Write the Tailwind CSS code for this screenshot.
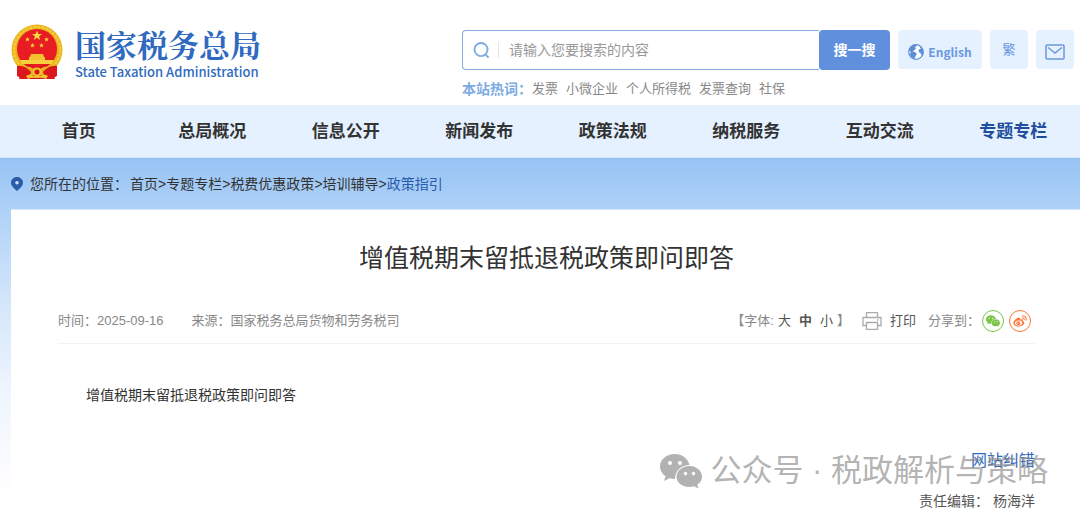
<!DOCTYPE html>
<html lang="zh-CN">
  <head>
    <meta charset="UTF-8" />
    <meta name="viewport" content="width=device-width, initial-scale=1.0" />
    <script src="https://cdn.jsdelivr.net/npm/@tailwindcss/browser@4"></script>
    <title>增值税期末留抵退税政策即问即答</title>
  </head>
  <body class="relative min-h-screen flex flex-col overflow-x-hidden bg-white text-[#333] font-['Liberation_Sans','Noto_Sans_CJK_SC',sans-serif]">
    <!-- header -->
    <header class="flex items-start justify-between pl-[11px] pr-1.5 h-[105px]">
      <a href="#" class="flex items-center gap-3 pt-[22px]">
        <svg class="w-[52px] h-[58px]" viewBox="0 0 52 58">
          <path d="M7 41 L45 41 L46 53 L40 56 H12 L6 53Z" fill="#d8151c" />
          <circle cx="26" cy="27" r="25.5" fill="#e9b21c" />
          <circle cx="26" cy="27" r="23" fill="none" stroke="#f5cb38" stroke-width="2.5" stroke-dasharray="3 1" />
          <circle cx="26" cy="26" r="20" fill="#e81c23" />
          <path d="M26 7.500l1.300 3.400 3.700.1-2.900 2.300 1 3.600-3.100-2.100-3.100 2.100 1-3.600-2.900-2.300 3.700-.1z" fill="#fbdc3c" />
          <g fill="#f7cf35">
            <path id="star" d="M16.500 14l.7 1.600 1.700.1-1.300 1.100.4 1.700-1.500-.9-1.500.9.400-1.700-1.300-1.100 1.700-.1z" />
            <use href="#star" x="19" />
            <use href="#star" x="5" y="6" />
            <use href="#star" x="14" y="6" />
          </g>
          <path d="M20 31h12l1 3h-14zM18 34h16v3h3v3H15v-3h3z" fill="#f2c22e" />
          <path d="M9 37h34l-2 4H11z" fill="#f6cf3c" />
          <path d="M6 42c8 3 12 0 20 4 8-4 12-1 20-4l-5 10H11z" fill="#e9b21c" />
          <path d="M6 43c8-1 12 4 14 6l-2 7H8l1-3-3-1zM46 43c-8-1-12 4-14 6l2 7h10l-1-3 3-1z" fill="#dc161d" />
          <path d="M15 42q5 0 8 3M37 42q-5 0-8 3" fill="none" stroke="#dc161d" stroke-width="2" />
          <circle cx="26" cy="49" r="3.500" fill="#d8151c" stroke="#f2c22e" stroke-width="2" />
          <path d="M15 53q4-3 8 0h6q4-3 8 0l-2 3q-4-2-9-1-5-1-9 1z" fill="#f2c22e" />
        </svg>
        <span class="flex flex-col pt-1 text-[#2f6ac0] font-['Noto_Sans_CJK_SC',sans-serif]">
          <span class="font-['Noto_Serif_CJK_SC','Noto_Sans_CJK_SC',serif] text-[31px] leading-9 font-bold">国家税务总局</span>
          <span class="text-[13px] leading-5 font-medium">State Taxation Administration</span>
        </span>
      </a>

      <div class="flex flex-col pt-[30px]">
        <div class="flex gap-2">
          <form class="flex w-[428px] h-10">
            <div class="flex flex-1 items-center border border-r-0 border-[#85aadf] rounded-l pl-2.5">
              <label for="keyword" aria-label="搜索">
                <svg class="w-[17px] h-[17px]" viewBox="0 0 18 18" fill="none" stroke="#7eabe3" stroke-width="2">
                  <circle cx="8.500" cy="8" r="6.900" />
                  <path d="M12.500 12.500L16.500 16.500" />
                </svg>
              </label>
              <span class="w-px h-4 ml-2 bg-[#e5e5e5]"></span>
              <input id="keyword" type="text" placeholder="请输入您要搜索的内容" class="flex-1 min-w-0 ml-2.5 text-sm outline-none placeholder:text-[#999]" />
            </div>
            <button type="submit" class="w-[71px] rounded bg-[#6090dd] text-white text-sm font-bold">搜一搜</button>
          </form>
          <a href="#" class="flex items-center justify-center gap-1 w-[84px] h-[39px] pt-1 rounded bg-[#e5f1ff] text-[#6a98df] text-xs font-bold font-['Noto_Sans_CJK_SC',sans-serif]">
            <svg class="w-4 h-4" viewBox="0 0 16 16">
              <circle cx="8" cy="8" r="7.300" fill="#fff" stroke="#5d8fd9" stroke-width="1.200" />
              <path d="M1 6c0-3 3-5.300 7-5.300l1 1.300-2 1 1 1.500-2 2-1.500 1 2.500.5 2 2-1.500 2-1 3C4 14 2 12 1 9l2 .5L2 7z" fill="#5d8fd9" />
              <path d="M11 2c3 1 4.500 4 4.300 7l-1.800 3-1-3-2-1 .5-2.500L13 4.500z" fill="#5d8fd9" />
            </svg>
            English
          </a>
          <a href="#" class="flex items-center justify-center w-[38px] h-[39px] rounded bg-[#e5f1ff] text-[#6a98df] text-[13px]">繁</a>
          <a href="#" aria-label="邮箱" class="flex items-center justify-center w-[38px] h-[39px] pt-1 rounded bg-[#e5f1ff]">
            <svg class="w-5 h-4" viewBox="0 0 20 16" fill="none" stroke="#6e98d6" stroke-width="1.500">
              <rect x="1" y="1" width="18" height="14" rx="1" />
              <path d="M3 3.500L10 9L17 3.500" />
            </svg>
          </a>
        </div>
        <div class="flex items-center gap-2 pt-2 text-[13px] leading-[22px] text-[#888]">
          <strong class="text-sm leading-[22px] text-[#7cabe3] -mr-2">本站热词：</strong>
          <a href="#">发票</a>
          <a href="#">小微企业</a>
          <a href="#">个人所得税</a>
          <a href="#">发票查询</a>
          <a href="#">社保</a>
        </div>
      </div>
    </header>

    <!-- nav -->
    <nav class="grid grid-cols-8 pl-3 h-[53px] border-b border-[#d0e3fa] bg-[#e5f1ff] text-center text-[17px] leading-[53px] font-bold">
      <a href="#">首页</a>
      <a href="#">总局概况</a>
      <a href="#">信息公开</a>
      <a href="#">新闻发布</a>
      <a href="#">政策法规</a>
      <a href="#">纳税服务</a>
      <a href="#">互动交流</a>
      <a href="#" class="text-[#204e9c]">专题专栏</a>
    </nav>

    <!-- content -->
    <div class="flex flex-col flex-1 pl-[11px] bg-[linear-gradient(to_bottom,#97c3f4_0%,#afd2f8_15%,#d6e7fa_42%,#eef5fe_65%,#ffffff_95%)]">
      <div class="flex items-center h-[51px] text-sm">
        <svg class="w-3 h-[14px] mr-[7px]" viewBox="0 0 12 14">
          <path d="M6 0C2.600 0 0 2.600 0 5.700 0 9 3 11 6 14c3-3 6-5 6-8.300C12 2.600 9.400 0 6 0z" fill="#2a5caa" />
          <circle cx="6" cy="5.700" r="1.800" fill="#cfe2fa" />
        </svg>
        <span class="mr-0.5">您所在的位置：</span>
        <a href="#">首页</a>&gt;<a href="#">专题专栏</a>&gt;<a href="#">税费优惠政策</a>&gt;<a href="#">培训辅导</a>&gt;<a href="#" class="text-[#2a5caa]">政策指引</a>
      </div>

      <main class="flex-1 border-t border-[#d5e7fc] bg-white pl-[47px] pr-[45px]">
        <h1 class="pt-7 text-center text-[25px] leading-10">增值税期末留抵退税政策即问即答</h1>

        <div class="flex items-center justify-between mt-5 h-[46px] border-b border-[#f3f3f3] text-[13px] text-[#888]">
          <div class="flex gap-7">
            <span>时间：2025-09-16</span>
            <span>来源：国家税务总局货物和劳务税司</span>
          </div>
          <div class="flex items-center pr-1">
            <span>【字体:</span>
            <button class="ml-1 text-[#555]">大</button>
            <button class="ml-2 text-[#555] font-bold">中</button>
            <button class="ml-2 text-[#555]">小</button>
            <span class="ml-1">】</span>
            <button class="flex items-center gap-2 ml-3 text-[#555]">
              <svg class="w-5 h-[18px]" viewBox="0 0 20 18" fill="none" stroke="#aaa" stroke-width="1.300">
                <path d="M4.500 5.500V.7h11v4.800M4.500 13.500H1V5.500h18v8h-3.500" />
                <path d="M4.500 10.500h11v6.800h-11z" />
                <path d="M15 8h1.500" />
              </svg>
              打印
            </button>
            <span class="ml-3">分享到：</span>
            <a href="#" aria-label="微信" class="flex items-center justify-center w-[22px] h-[22px] ml-0.5 rounded-full border border-[#7bc549]">
              <svg class="w-[14px] h-3" viewBox="0 0 42 34">
                <path d="M15 0C6.500 0 0 5.500 0 12.500c0 4 2 7.300 5.500 9.700L4 27l5.500-2.800c2 .6 3.500.8 5.500.8C15 17 21 11 29.500 11 28 4.500 22 0 15 0z" fill="#7bc549" />
                <path d="M29.500 12C22 12 16.500 17 16.500 22.800S22 33 29.500 33c1.600 0 3-.2 4.500-.7l4.500 2.200-1.200-3.800C40.500 28.700 42 26 42 22.800 42 17 36.500 12 29.500 12z" fill="#7bc549" />
                <g fill="#fff"><circle cx="10" cy="9" r="2" /><circle cx="20" cy="9" r="2" /><circle cx="25.500" cy="19.500" r="1.700" /><circle cx="33.500" cy="19.500" r="1.700" /></g>
              </svg>
            </a>
            <a href="#" aria-label="微博" class="flex items-center justify-center w-[22px] h-[22px] ml-[5px] rounded-full border border-[#ff763b]">
              <svg class="w-[14px] h-3" viewBox="0 0 24 20" fill="none">
                <path d="M9.500 4C5 5.500.5 10 .5 13.500.5 17 4.500 19.500 9.500 19.500c6 0 10-3.300 10-6.300 0-2-1.500-3-3-3.400.8-2.300-.5-3.800-4.500-2.300.6-2-.2-4-2.500-3.500z" fill="#ff763b" />
                <ellipse cx="9.500" cy="13.500" rx="6.200" ry="4.200" fill="#fff" transform="rotate(-8 9.500 13.500)" />
                <circle cx="9" cy="13.800" r="3.300" fill="#ff763b" />
                <circle cx="8" cy="14.300" r="1" fill="#fff" />
                <path d="M15.500 1.500c4.500-1 8 2.500 6.800 7M16 5c2-.3 3.500 1 3 3" stroke="#ff763b" stroke-width="1.800" stroke-linecap="round" />
              </svg>
            </a>
          </div>
        </div>

        <p class="pt-[39px] pl-7 text-sm leading-6">增值税期末留抵退税政策即问即答</p>

        <div class="flex flex-col items-end pt-[42px] text-[#555]">
          <a href="#" class="text-base leading-6 text-[#2f6ac0]">网站纠错</a>
          <p class="pt-4 text-sm leading-6">责任编辑： 杨海洋</p>
        </div>
      </main>
    </div>

    <!-- watermark -->
    <div class="absolute right-8 bottom-[22px] flex items-center gap-2 text-[31px] leading-[46px] text-[#888]/65 pointer-events-none font-['Liberation_Sans','Noto_Sans_CJK_SC',sans-serif]">
      <svg class="w-[42px] h-[35px]" viewBox="0 0 42 35">
        <path d="M15 0C6.500 0 0 5.500 0 12.500c0 4 2 7.300 5.500 9.700L4 27l5.500-2.800c2 .6 3.500.8 5.500.8C15 17 21 11 29.500 11 28 4.500 22 0 15 0z" fill="#b2b2b2" />
        <path d="M29.500 12C22 12 16.500 17 16.500 22.800S22 33 29.500 33c1.600 0 3-.2 4.500-.7l4.500 2.200-1.200-3.800C40.500 28.700 42 26 42 22.800 42 17 36.500 12 29.500 12z" fill="#b2b2b2" />
        <g fill="#fff"><circle cx="10" cy="9" r="2" /><circle cx="20" cy="9" r="2" /><circle cx="25.500" cy="19.500" r="1.700" /><circle cx="33.500" cy="19.500" r="1.700" /></g>
      </svg>
      <span lang="en">公众号 · 税政解析与策略</span>
    </div>
  </body>
</html>
